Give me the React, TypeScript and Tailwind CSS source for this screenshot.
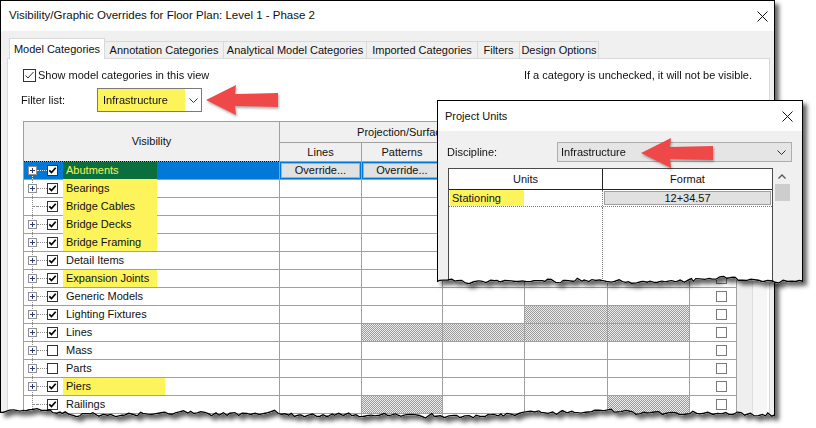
import React from "react";

type Row = {
  name: string;
  expand: boolean;
  checked: boolean;
  mark?: number;
  joinUp?: boolean;
  selected?: boolean;
  hatch?: number[];
};

const rows: Row[] = [
  { name: "Abutments", expand: true, checked: true, mark: 94, selected: true },
  { name: "Bearings", expand: true, checked: true, mark: 94, joinUp: true },
  { name: "Bridge Cables", expand: false, checked: true, mark: 94, joinUp: true },
  { name: "Bridge Decks", expand: true, checked: true, mark: 94, joinUp: true },
  { name: "Bridge Framing", expand: true, checked: true, mark: 94, joinUp: true },
  { name: "Detail Items", expand: true, checked: true },
  { name: "Expansion Joints", expand: true, checked: true, mark: 94 },
  { name: "Generic Models", expand: true, checked: true },
  { name: "Lighting Fixtures", expand: true, checked: true, hatch: [4, 5] },
  { name: "Lines", expand: true, checked: true, hatch: [2, 3, 4, 5] },
  { name: "Mass", expand: true, checked: false },
  { name: "Parts", expand: true, checked: false },
  { name: "Piers", expand: true, checked: true, mark: 102 },
  { name: "Railings", expand: false, checked: true, hatch: [2, 5] },
  { name: "Ramps", expand: true, checked: true },
];

const tabs = [
  { label: "Model Categories", w: "w-[96px]", active: true },
  { label: "Annotation Categories", w: "w-[119px]" },
  { label: "Analytical Model Categories", w: "w-[143px]" },
  { label: "Imported Categories", w: "w-[111px]" },
  { label: "Filters", w: "w-[42px]" },
  { label: "Design Options", w: "w-[79px]" },
];

const HATCH =
  "bg-[repeating-conic-gradient(#9a9a9a_0%_25%,#ededed_0%_50%)] bg-[length:2px_2px]";

// jagged "torn paper" edge
function makeTear(width: number, base: number, amp: number, seed: number) {
  let s = seed;
  const rnd = () => {
    s = (s * 16807) % 2147483647;
    return s / 2147483647;
  };
  const pts: [number, number][] = [];
  let drift = 0;
  for (let x = 0; x < width; x += 2 + rnd() * 3) {
    drift += (rnd() - 0.5) * 2;
    if (drift > amp) drift = amp;
    if (drift < -amp) drift = -amp;
    pts.push([x, base + drift + (rnd() - 0.5) * 3]);
  }
  pts.push([width, base + drift]);
  return pts;
}

function toClip(pts: [number, number][], width: number) {
  const rev = [...pts].reverse().map(([x, y]) => `${x.toFixed(1)}px ${y.toFixed(1)}px`);
  return `polygon(0px 0px, ${width}px 0px, ${rev.join(", ")})`;
}

function TearLine({ pts, w, h }: { pts: [number, number][]; w: number; h: number }) {
  return (
    <svg
      width={w}
      height={h}
      className="pointer-events-none absolute -left-px -top-px overflow-visible"
    >
      <polyline
        points={pts.map(([x, y]) => `${x},${y - 0.5}`).join(" ")}
        fill="none"
        stroke="#000"
        strokeWidth="1.8"
      />
    </svg>
  );
}

function CloseX() {
  return (
    <svg width="11" height="11" viewBox="0 0 11 11">
      <path d="M0.5 0.5 L10.5 10.5 M10.5 0.5 L0.5 10.5" stroke="#111" strokeWidth="1" />
    </svg>
  );
}

function Chevron() {
  return (
    <svg width="9" height="5" viewBox="0 0 9 5">
      <polyline points="0.5,0.5 4.5,4.5 8.5,0.5" fill="none" stroke="#333" strokeWidth="1" />
    </svg>
  );
}

function RedArrow() {
  return (
    <svg width="74" height="32" viewBox="0 0 74 32" className="drop-shadow-[1px_2px_1px_rgba(0,0,0,0.3)]">
      <polygon points="1,16 31,1 30,10 73,9 73,23 30,22 31,31" fill="#ef4848" />
    </svg>
  );
}

function Box({ on, size = 11, border = "#333" }: { on: boolean; size?: number; border?: string }) {
  return (
    <svg width={size} height={size} viewBox={`0 0 ${size} ${size}`} className="shrink-0">
      <rect x="0.5" y="0.5" width={size - 1} height={size - 1} fill="#fff" stroke={border} />
      {on && size === 11 && (
        <path d="M2.3 5.3 L4.5 7.6 L8.7 2.8" fill="none" stroke="#000" strokeWidth="1.7" />
      )}
      {on && size !== 11 && (
        <path d="M2.5 6.5 L5 9 L10.5 3" fill="none" stroke="#333" strokeWidth="1" />
      )}
    </svg>
  );
}

function Plus() {
  return (
    <svg width="5" height="5" viewBox="0 0 5 5">
      <path d="M0 2.5 H5 M2.5 0 V5" stroke="#2c3e70" strokeWidth="1" />
    </svg>
  );
}

function VisCell({ r, first }: { r: Row; first: boolean }) {
  const dots = r.selected ? "border-[#d8e8f8]" : "border-[#8a8a8a]";
  const markBg = r.selected ? "bg-[#0b6f3d] text-[#f6f25a]" : "bg-[#fdf35b]";
  return (
    <div className={`relative flex items-stretch ${r.selected ? "bg-[#0078d7]" : "bg-white"}`}>
      {r.selected && <div className="absolute -top-px left-0 right-0 border-t border-dotted border-black" />}
      <div
        className={`absolute left-[8px] ${first ? "top-1/2" : "-top-px"} bottom-0 border-l border-dotted ${dots}`}
      />
      {r.expand ? (
        <div className="relative ml-[4px] flex h-[9px] w-[9px] shrink-0 items-center justify-center self-center border border-[#919191] bg-white">
          <Plus />
        </div>
      ) : (
        <div className="ml-[4px] w-[9px] shrink-0 self-center">
          <div className={`ml-[5px] w-[4px] border-t border-dotted ${dots}`} />
        </div>
      )}
      <div className={`w-[10px] shrink-0 self-center border-t border-dotted ${dots}`} />
      <div className="flex items-center">
        <Box on={r.checked} />
      </div>
      {r.mark ? (
        <div
          className={`ml-[5px] flex items-center pl-[3px] ${markBg} ${r.mark === 102 ? "w-[102px]" : "w-[94px]"} ${
            r.joinUp ? "shadow-[0_-1px_0_#fdf35b]" : ""
          }`}
        >
          {r.name}
        </div>
      ) : (
        <div className="ml-[8px] flex items-center">{r.name}</div>
      )}
    </div>
  );
}

function DataCell({ r, col }: { r: Row; col: number }) {
  if (r.selected) {
    return (
      <div className="flex bg-[#0078d7] px-px py-px">
        {col <= 2 && (
          <div className="flex flex-1 items-center justify-center border border-[#adadad] bg-[#e1e1e1]">
            Override...
          </div>
        )}
      </div>
    );
  }
  const hatched = r.hatch?.includes(col);
  return <div className={hatched ? HATCH : "bg-white"} />;
}

function HeadCell({ children, className = "" }: { children?: React.ReactNode; className?: string }) {
  return <div className={`flex items-center justify-center bg-[#f0f0f0] ${className}`}>{children}</div>;
}

function CategoryGrid() {
  // header cells that sit fully behind the Project Units dialog stay empty
  return (
    <div className="flex">
      <div className="grid grid-cols-[255px_81px_80px_81px_82px_81px_46px] grid-rows-[20px_18px] auto-rows-[17px] gap-px border border-[#a0a0a0] bg-[#a0a0a0]">
        <HeadCell className="row-span-2">Visibility</HeadCell>
        <HeadCell className="col-span-3">Projection/Surface</HeadCell>
        <HeadCell className="col-span-2" />
        <HeadCell className="row-span-2" />
        <HeadCell>Lines</HeadCell>
        <HeadCell>Patterns</HeadCell>
        <HeadCell />
        <HeadCell />
        <HeadCell />
        {rows.map((r, i) => (
          <React.Fragment key={r.name}>
            <VisCell r={r} first={i === 0} />
            {[1, 2, 3, 4, 5].map((c) => (
              <DataCell key={c} r={r} col={c} />
            ))}
            <div className={`flex items-center pl-[26px] ${r.selected ? "bg-[#0078d7]" : "bg-white"}`}>
              <Box on={false} border="#7a7a7a" />
            </div>
          </React.Fragment>
        ))}
      </div>
      <div className="w-[16px] border-r border-[#dedede] bg-[#efefef]" />
      <div className="w-[14px] bg-[#f6f6f6]" />
    </div>
  );
}

const mainTear = makeTear(775, 414, 3.5, 11);

function MainWindow() {
  return (
    <div className="w-[775px] drop-shadow-[4px_4px_2px_rgba(0,0,0,0.6)]">
      <div
        className="relative h-[422px] border border-black bg-[#f0f0f0]"
        style={{ clipPath: toClip(mainTear, 775) }}
      >
        <div className="flex h-[30px] items-center justify-between bg-white pl-2 pr-[6px]">
          <span className="text-[11.5px]">Visibility/Graphic Overrides for Floor Plan: Level 1 - Phase 2</span>
          <CloseX />
        </div>

        <div className="flex h-[27px] items-end pl-2">
          {tabs.map((t) =>
            t.active ? (
              <div
                key={t.label}
                className={`relative z-10 -mb-px flex h-[21px] items-center justify-center border border-b-0 border-[#d9d9d9] bg-white ${t.w}`}
              >
                {t.label}
              </div>
            ) : (
              <div
                key={t.label}
                className={`flex h-[17px] items-center justify-center border-t border-r border-[#d9d9d9] bg-[#f0f0f0] ${t.w}`}
              >
                {t.label}
              </div>
            )
          )}
        </div>

        <div className="ml-[6px] mr-[4px] h-[370px] border border-[#d9d9d9] bg-white pl-[15px] pr-[2px]">
          <div className="mt-[8px] flex h-[16px] items-center justify-between pr-[15px]">
            <div className="flex items-center gap-[2px]">
              <Box on size={13} />
              <span>Show model categories in this view</span>
            </div>
            <span>If a category is unchecked, it will not be visible.</span>
          </div>

          <div className="-ml-[2px] mt-[5px] flex h-[24px] items-center">
            <span className="w-[76px]">Filter list:</span>
            <div className="flex h-[24px] w-[105px] border border-[#7a7a7a] bg-white">
              <div className="flex w-[87px] items-center bg-[#fdf35b] pl-[5px]">Infrastructure</div>
              <div className="flex flex-1 items-center justify-center">
                <Chevron />
              </div>
            </div>
            <div className="ml-[3px] flex items-center">
              <RedArrow />
            </div>
          </div>

          <div className="mt-[9px]">
            <CategoryGrid />
          </div>
        </div>

        <TearLine pts={mainTear} w={775} h={422} />
      </div>
    </div>
  );
}

const unitsTear = makeTear(366, 182, 3.5, 7);

function ProjectUnits() {
  return (
    <div className="absolute left-[437px] top-[100px] drop-shadow-[4px_4px_2px_rgba(0,0,0,0.6)]">
      <div
        className="relative h-[192px] w-[366px] border border-black bg-[#f0f0f0]"
        style={{ clipPath: toClip(unitsTear, 366) }}
      >
        <div className="flex h-[30px] items-center justify-between bg-white pl-[7px] pr-[9px]">
          <span>Project Units</span>
          <CloseX />
        </div>

        <div className="mt-[11px] flex h-[20px] items-center">
          <span className="w-[119px] pl-[9px]">Discipline:</span>
          <div className="flex h-[20px] w-[235px] items-center justify-between border border-[#adadad] bg-[#e5e5e5] pl-[3px] pr-[5px]">
            <span>Infrastructure</span>
            <Chevron />
          </div>
        </div>

        <div className="absolute left-[202px] top-[36px]">
          <RedArrow />
        </div>

        <div className="ml-[10px] mt-[6px] flex h-[200px]">
          <div className="flex w-[325px] flex-col border border-[#4a4a4a] bg-white">
            <div className="flex h-[21px] border-b border-[#222]">
              <div className="flex w-[154px] items-center justify-center border-r border-[#222]">Units</div>
              <div className="flex flex-1 items-center justify-center">Format</div>
            </div>
            <div className="flex h-[17px] border-b border-dotted border-[#7a7a7a]">
              <div className="flex w-[154px] border-r border-dotted border-[#7a7a7a]">
                <div className="ml-px flex w-[74px] items-center bg-[#fdf35b] pl-[2px]">Stationing</div>
              </div>
              <div className="flex flex-1 p-px">
                <div className="flex flex-1 items-center justify-center border border-[#a0a0a0] bg-[#e1e1e1]">
                  12+34.57
                </div>
              </div>
            </div>
            <div className="flex flex-1">
              <div className="w-[154px] border-r border-dotted border-[#7a7a7a]" />
              <div className="flex-1" />
            </div>
          </div>
          <div className="w-[18px] bg-[#f0f0f0]">
            <div className="flex h-[16px] items-center justify-center">
              <svg width="8" height="5" viewBox="0 0 8 5">
                <polyline points="0.5,4.5 4,1 7.5,4.5" fill="none" stroke="#555" strokeWidth="1.3" />
              </svg>
            </div>
            <div className="ml-[2px] h-[17px] w-[15px] bg-[#cdcdcd]" />
          </div>
        </div>

        <TearLine pts={unitsTear} w={366} h={192} />
      </div>
    </div>
  );
}

export default function App() {
  return (
    <div className="relative h-[428px] w-[816px] overflow-hidden bg-white font-['Liberation_Sans',Arial,sans-serif] text-[11px] leading-none text-[#111]">
      <MainWindow />
      <ProjectUnits />
    </div>
  );
}
